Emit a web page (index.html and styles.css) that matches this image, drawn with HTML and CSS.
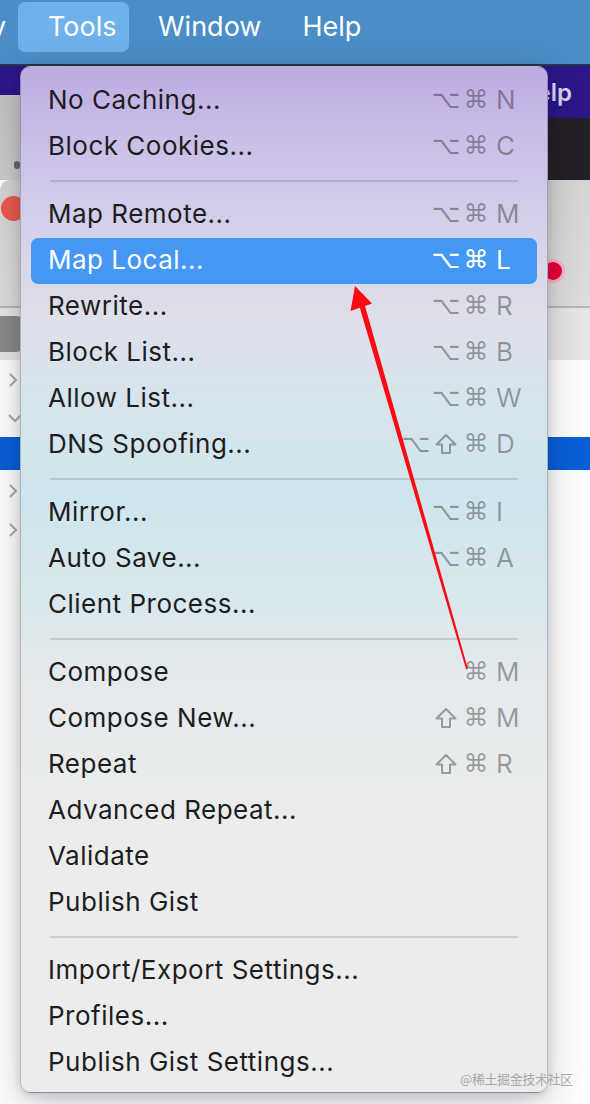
FILE: index.html
```html
<!DOCTYPE html>
<html>
<head>
<meta charset="utf-8">
<link rel="stylesheet" href="styles.css">
</head>
<body>
<div class="screen">
  <header class="menubar">
    <span class="mb-item mb-partial">y</span>
    <span class="mb-item mb-active">Tools</span>
    <span class="mb-item mb-window">Window</span>
    <span class="mb-item mb-help">Help</span>
  </header>

  <div class="backdrop">
    <div class="band">
      <div class="band-left">
        <div class="band-left-purple"></div>
        <div class="band-left-grey"><span class="smudge"></span></div>
      </div>
      <div class="band-right">
        <div class="band-purple"><span class="appbar-help">Help</span></div>
        <div class="band-dark"></div>
      </div>
    </div>
    <div class="toolbar">
      <span class="traffic"></span>
      <span class="record"></span>
    </div>
    <div class="subbar"><span class="pill"></span></div>
    <div class="tree">
      <div class="tree-row r1"><svg class="chev" viewBox="0 0 12 16"><polyline points="3,2 9,8 3,14"/></svg></div>
      <div class="tree-row r2"><svg class="chev down" viewBox="0 0 16 12"><polyline points="2,3 8,9 14,3"/></svg></div>
      <div class="tree-row selected"></div>
      <div class="tree-row r4"><svg class="chev" viewBox="0 0 12 16"><polyline points="3,2 9,8 3,14"/></svg></div>
      <div class="tree-row r5"><svg class="chev" viewBox="0 0 12 16"><polyline points="3,2 9,8 3,14"/></svg></div>
    </div>
  </div>

  <nav class="menu">
    <div class="item"><span class="label">No Caching...</span><span class="sc"><span class="mod">⌥</span><span class="mod">⌘</span><span class="key">N</span></span></div>
    <div class="item"><span class="label">Block Cookies...</span><span class="sc"><span class="mod">⌥</span><span class="mod">⌘</span><span class="key">C</span></span></div>
    <div class="sep"></div>
    <div class="item"><span class="label">Map Remote...</span><span class="sc"><span class="mod">⌥</span><span class="mod">⌘</span><span class="key">M</span></span></div>
    <div class="item active"><span class="label">Map Local...</span><span class="sc"><span class="mod">⌥</span><span class="mod">⌘</span><span class="key">L</span></span></div>
    <div class="item"><span class="label">Rewrite...</span><span class="sc"><span class="mod">⌥</span><span class="mod">⌘</span><span class="key">R</span></span></div>
    <div class="item"><span class="label">Block List...</span><span class="sc"><span class="mod">⌥</span><span class="mod">⌘</span><span class="key">B</span></span></div>
    <div class="item"><span class="label">Allow List...</span><span class="sc"><span class="mod">⌥</span><span class="mod">⌘</span><span class="key">W</span></span></div>
    <div class="item"><span class="label">DNS Spoofing...</span><span class="sc"><span class="mod">⌥</span><span class="mod"><svg class="shift" viewBox="0 0 24 24"><path d="M12 3 L21.5 12.5 H16 V21 H8 V12.5 H2.5 Z"/></svg></span><span class="mod">⌘</span><span class="key">D</span></span></div>
    <div class="sep"></div>
    <div class="item"><span class="label">Mirror...</span><span class="sc"><span class="mod">⌥</span><span class="mod">⌘</span><span class="key">I</span></span></div>
    <div class="item"><span class="label">Auto Save...</span><span class="sc"><span class="mod">⌥</span><span class="mod">⌘</span><span class="key">A</span></span></div>
    <div class="item"><span class="label">Client Process...</span></div>
    <div class="sep"></div>
    <div class="item"><span class="label">Compose</span><span class="sc"><span class="mod">⌘</span><span class="key">M</span></span></div>
    <div class="item"><span class="label">Compose New...</span><span class="sc"><span class="mod"><svg class="shift" viewBox="0 0 24 24"><path d="M12 3 L21.5 12.5 H16 V21 H8 V12.5 H2.5 Z"/></svg></span><span class="mod">⌘</span><span class="key">M</span></span></div>
    <div class="item"><span class="label">Repeat</span><span class="sc"><span class="mod"><svg class="shift" viewBox="0 0 24 24"><path d="M12 3 L21.5 12.5 H16 V21 H8 V12.5 H2.5 Z"/></svg></span><span class="mod">⌘</span><span class="key">R</span></span></div>
    <div class="item"><span class="label">Advanced Repeat...</span></div>
    <div class="item"><span class="label">Validate</span></div>
    <div class="item"><span class="label">Publish Gist</span></div>
    <div class="sep"></div>
    <div class="item"><span class="label">Import/Export Settings...</span></div>
    <div class="item"><span class="label">Profiles...</span></div>
    <div class="item"><span class="label">Publish Gist Settings...</span></div>
  </nav>

  <svg class="arrow" viewBox="0 0 590 1104" width="590" height="1104">
    <polygon points="467.9,668.7 466.1,669.3 358.4,302.9 363.6,301.1" fill="#ff0a12"/>
    <polygon points="355,286 350.5,311 372,303.5" fill="#ff0a12"/>
  </svg>

  <div class="watermark">@稀土掘金技术社区</div>
</div>
</body>
</html>
```

FILE: styles.css
```css
* { box-sizing: border-box; }

html, body {
  margin: 0;
  padding: 0;
  background: #ffffff;
}

.screen {
  position: relative;
  width: 590px;
  height: 1104px;
  overflow: hidden;
  font-family: Inter, "Noto Sans", "Liberation Sans", sans-serif;
}

/* ---------- top menubar ---------- */
.menubar {
  height: 66px;
  background: #4a8dc7;
  border-bottom: 2px solid #27364a;
  display: flex;
  align-items: flex-start;
  color: #ffffff;
  font-size: 27px;
}

.mb-item {
  display: block;
  height: 50px;
  line-height: 50px;
  margin-top: 2px;
  white-space: nowrap;
}

.mb-partial {
  width: 18px;
  text-indent: -9px;
  overflow: hidden;
}

.mb-active {
  width: 111px;
  padding-left: 30px;
  background: #6fb1ea;
  border-radius: 7px;
}

.mb-window { margin-left: 29px; }
.mb-help { margin-left: 41px; }

/* ---------- backdrop window ---------- */
.band {
  height: 114px;
  display: flex;
}

.band-left {
  width: 60px;
  display: flex;
  flex-direction: column;
}

.band-left-purple {
  height: 29px;
  background: #2c1689;
}

.band-left-grey {
  flex: 1;
  background: linear-gradient(#c4c4c6, #cdcdcf);
  position: relative;
}

.smudge {
  position: absolute;
  left: 14px;
  top: 66px;
  width: 6px;
  height: 8px;
  border-radius: 3px;
  background: #6a6a6a;
}

.band-right {
  flex: 1;
  display: flex;
  flex-direction: column;
}

.band-purple {
  height: 52px;
  background: #2c1689;
  display: flex;
  justify-content: flex-end;
  align-items: center;
  padding-right: 18px;
}

.appbar-help {
  color: #d9d3f2;
  font-size: 24px;
  font-weight: 600;
  line-height: 30px;
  margin-top: 2px;
}

.band-dark {
  flex: 1;
  background: #242027;
}

.toolbar {
  height: 128px;
  background: linear-gradient(#d5d5d6, #dededf);
  border-top-left-radius: 10px;
  border-bottom: 2px solid #b9b9bb;
  display: flex;
  justify-content: space-between;
  align-items: flex-start;
}

.traffic {
  width: 25px;
  height: 25px;
  border-radius: 50%;
  background: #ec5a4c;
  margin-top: 16px;
  margin-left: 1px;
}

.record {
  width: 24px;
  height: 24px;
  border-radius: 50%;
  background: #e9003a;
  border: 3px solid #f6b7c6;
  margin-top: 79px;
  margin-right: 25px;
}

.subbar {
  height: 52px;
  background: #e6e6e7;
  padding-top: 8px;
}

.pill {
  display: block;
  width: 40px;
  height: 36px;
  margin-left: -16px;
  border-radius: 8px;
  background: #8a8a8c;
}

.tree-row {
  display: flex;
  align-items: center;
  padding-left: 7px;
}

.r1 { height: 39px; }
.r2 { height: 38px; }
.tree-row.selected { height: 33px; background: #0a60d9; }
.r4 { height: 42px; }
.r5 { height: 36px; }

.chev {
  width: 12px;
  height: 16px;
  fill: none;
  stroke: #aaaaac;
  stroke-width: 2;
}

.chev.down {
  width: 16px;
  height: 12px;
}

/* ---------- dropdown menu ---------- */
.menu {
  position: absolute;
  left: 20px;
  top: 66px;
  width: 528px;
  height: 1027px;
  padding: 11px 10px 7px;
  border-radius: 10px;
  border: 1px solid rgba(0, 0, 0, 0.22);
  background: linear-gradient(180deg,
    #bdabe3 0%,
    #cbc1e8 8%,
    #d6d1ea 16%,
    #dedfe9 24%,
    #d6e5ed 33%,
    #cfe5ed 42%,
    #d9e8ec 52%,
    #e6eaec 60%,
    #ebecec 75%,
    #ececec 100%);
  box-shadow: 0 12px 40px rgba(0, 0, 0, 0.22), 0 2px 8px rgba(0, 0, 0, 0.12);
  color: #1d1d1f;
  font-size: 26px;
}

.item {
  height: 46px;
  display: flex;
  align-items: center;
  padding: 0 19px 3px 17px;
  border-radius: 7px;
}

.label {
  letter-spacing: 0.5px;
  white-space: nowrap;
}

.item.active {
  background: #4497f3;
  color: #ffffff;
}

.sc {
  margin-left: auto;
  display: flex;
  align-items: center;
  color: rgba(0, 0, 0, 0.34);
}

.item.active .sc { color: #ffffff; }

.mod {
  width: 30px;
  height: 40px;
  display: flex;
  align-items: center;
  justify-content: center;
  font-family: "DejaVu Sans", sans-serif;
  font-size: 25px;
}

.shift {
  width: 24px;
  height: 24px;
  fill: none;
  stroke: currentColor;
  stroke-width: 2;
  stroke-linejoin: round;
}

.key {
  width: 22px;
  margin-left: 5px;
  text-align: left;
}

.sep {
  height: 22px;
  display: flex;
  align-items: center;
  padding: 0 19px;
}

.sep::before {
  content: "";
  display: block;
  flex: 1;
  height: 2px;
  background: rgba(0, 0, 0, 0.12);
}

/* ---------- overlays ---------- */
.arrow {
  position: absolute;
  left: 0;
  top: 0;
  pointer-events: none;
}

.watermark {
  position: absolute;
  left: 460px;
  top: 1069px;
  font-family: "Noto Sans CJK SC", sans-serif;
  font-size: 13px;
  color: #a9a9a9;
  letter-spacing: -0.4px;
}
```
